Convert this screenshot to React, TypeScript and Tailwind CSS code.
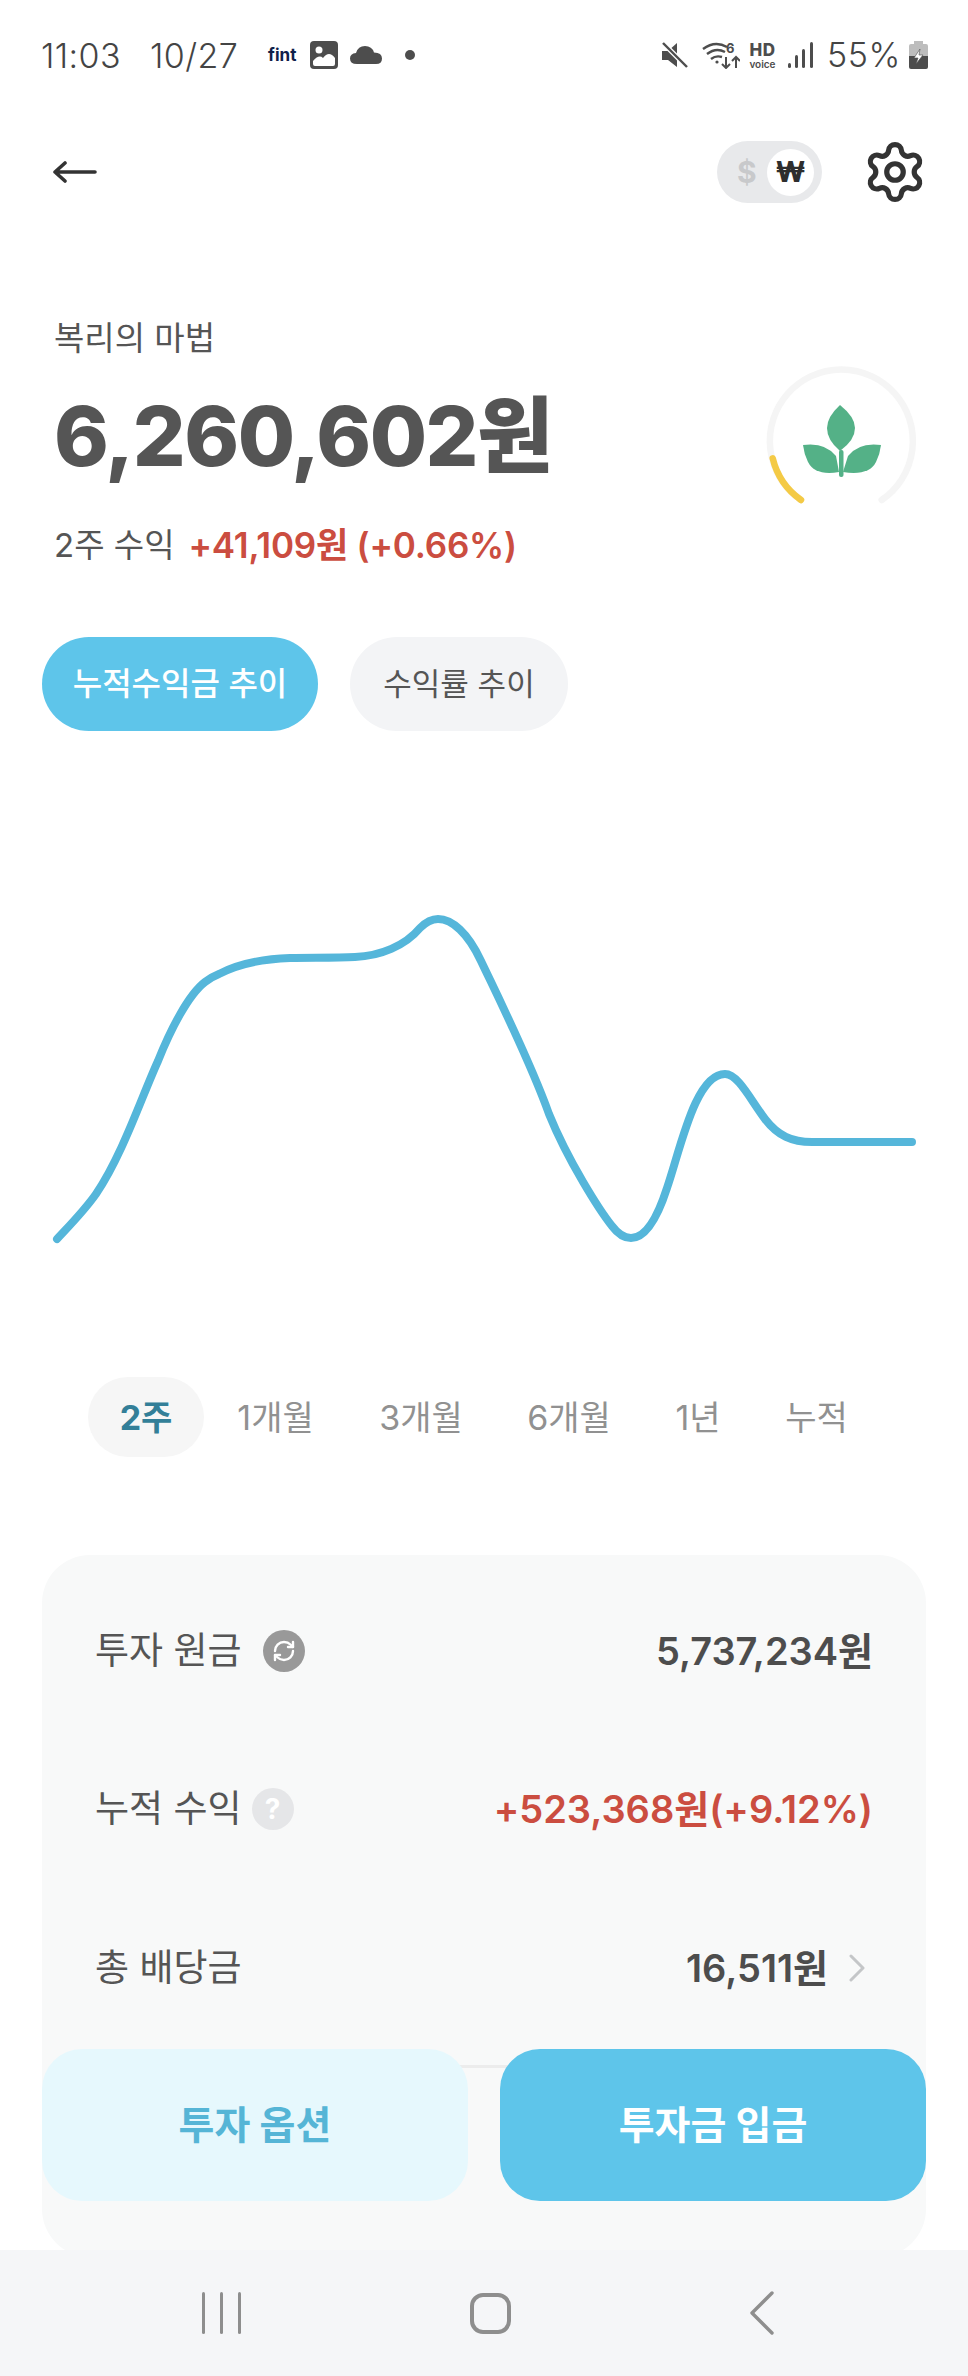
import { RefreshCw, Settings } from "lucide-react";

const chartPath =
  "M57 1238 C70 1224 84 1210 96 1193 C122 1155 142 1095 158 1060 C170 1030 188 994 205 981 C210 977 214 975 219 973 C240 962 262 958 290 957 C310 956.5 335 957 355 956 C380 955 405 945 420 927 C427 920 432 918 438 918 C452 918 468 932 481 960 C500 1000 530 1060 549 1113 C568 1160 600 1210 612 1225 C618 1233 624 1237 631 1237 C646 1237 658 1215 667 1187 C680 1150 695 1073 725 1073 C738 1073 750 1098 765 1118 C778 1135 792 1141 812 1141 L912 1141";

function StatusBar() {
  return (
    <div className="flex h-[110px] shrink-0 items-center justify-between pl-[41px] pr-[40px] text-[#444]">
      <div className="flex items-center">
        <span className="text-[34px] font-light tracking-[0.4px]">11:03</span>
        <span className="ml-[29px] text-[34px] font-light tracking-[0.4px]">10/27</span>
        <span className="ml-[30px] text-[17px] font-bold leading-none text-[#10204a]">fint</span>
        <svg className="ml-[14px]" width="28" height="28" viewBox="0 0 28 28">
          <rect width="28" height="28" rx="4" fill="#4d4d4d" />
          <circle cx="9" cy="9" r="3.5" fill="#fff" />
          <path d="M3 23 L3 20 Q9 13 13 17 Q19 9 25 17 L25 23 Q25 25 23 25 L5 25 Q3 25 3 23Z" fill="#fff" />
        </svg>
        <svg className="ml-[12px]" width="32" height="18" viewBox="0 0 32 18">
          <path d="M7 18 Q0 18 0 12.5 Q0 7.5 6 7 Q8 0 15 0 Q22 0 24 6.5 Q32 6.5 32 12.5 Q32 18 26 18Z" fill="#4d4d4d" />
        </svg>
        <div className="ml-[23px] h-[10px] w-[10px] rounded-full bg-[#4d4d4d]" />
      </div>
      <div className="flex items-center">
        <svg width="26" height="26" viewBox="0 0 26 26">
          <path d="M0 9 H6 L15 1 V25 L6 18 H0Z" fill="#4d4d4d" />
          <path d="M1 1 L25 25" stroke="#fff" strokeWidth="5" />
          <path d="M1 1 L25 25" stroke="#4d4d4d" strokeWidth="2.4" />
        </svg>
        <svg className="ml-[14px]" width="38" height="28" viewBox="0 0 38 28" fill="none" stroke="#4d4d4d">
          <path d="M1 8 Q13 -1 25 6" strokeWidth="2.4" />
          <path d="M5 13 Q14 6 23 11" strokeWidth="2.4" />
          <path d="M9 18 Q14 14 20 16" strokeWidth="2.4" />
          <circle cx="15" cy="21" r="1.6" fill="#4d4d4d" stroke="none" />
          <text x="24" y="12" fontSize="13" fontWeight="700" fill="#4d4d4d" stroke="none">6</text>
          <path d="M24 16 V27 M20 23 L24 27 L28 23" strokeWidth="2" />
          <path d="M34 27 V16 M30 20 L34 16 L38 20" strokeWidth="2" />
        </svg>
        <div className="ml-[7px] flex w-[31px] flex-col items-center text-[#4d4d4d]">
          <span className="text-[17px] font-extrabold leading-[17px] tracking-[0.5px]">HD</span>
          <span className="text-[10px] font-semibold leading-[10px]">voice</span>
        </div>
        <svg className="ml-[10px]" width="25" height="26" viewBox="0 0 25 26" fill="#4d4d4d">
          <rect x="0" y="21" width="3" height="5" rx="1.5" />
          <rect x="7" y="13" width="3" height="13" rx="1.5" />
          <rect x="14" y="7" width="3" height="19" rx="1.5" />
          <rect x="22" y="0" width="3" height="26" rx="1.5" />
        </svg>
        <span className="ml-[14px] text-[34px] font-light leading-none tracking-[0.6px]">55%</span>
        <svg className="ml-[8px]" width="19" height="28" viewBox="0 0 19 28">
          <path d="M5 0 H14 V3 H17 Q19 3 19 5 V15 H0 V5 Q0 3 2 3 H5Z" fill="#bdbdbd" />
          <path d="M0 15 H19 V26 Q19 28 17 28 H2 Q0 28 0 26Z" fill="#4d4d4d" />
          <path d="M11 8 L5 17 H9 L7 23 L14 14 H10Z" fill="#fff" stroke="#4d4d4d" strokeWidth="0.6" />
        </svg>
      </div>
    </div>
  );
}

function Header() {
  return (
    <div className="flex h-[124px] shrink-0 items-center justify-between pl-[53px] pr-[44px]">
      <svg width="44" height="22" viewBox="0 0 44 22" fill="none" stroke="#333" strokeWidth="3.6" strokeLinecap="round" strokeLinejoin="round">
        <path d="M2 11 H42 M12 2 L2 11 L12 20" />
      </svg>
      <div className="flex items-center gap-[44px]">
        <div className="flex h-[62px] w-[105px] items-center justify-between rounded-full bg-[#e8e9eb] pl-[20px] pr-[8px]">
          <span className="text-[30px] font-bold leading-none text-[#c8c9cb]">$</span>
          <div className="flex h-[47px] w-[47px] items-center justify-center rounded-full bg-white text-[28px] font-extrabold leading-none text-[#2e2e2e]">₩</div>
        </div>
        <Settings size={66} strokeWidth={1.9} color="#333" className="-mx-[4px]" />
      </div>
    </div>
  );
}

function Sprout() {
  return (
    <svg className="mt-[44px] shrink-0" width="168" height="160" viewBox="760 362 168 160" fill="none">
      <path d="M801 500 A71.5 71.5 0 1 1 881.7 500" stroke="#f5f5f5" strokeWidth="6.5" strokeLinecap="round" />
      <path d="M772.7 458.3 A71.5 71.5 0 0 0 801 500" stroke="#f4ca45" strokeWidth="6.5" strokeLinecap="round" />
      <g fill="#54b187">
        <path d="M840 405 Q855 417 855 428 Q855 440 840 451 Q827 440 827 428 Q827 417 840 405Z" />
        <path d="M803 445 Q825 442 836 456 L839 472 Q815 476 808 462 Q804 454 803 445Z" />
        <path d="M881 445 Q859 442 848 456 L843 472 Q869 476 876 462 Q880 454 881 445Z" />
        <rect x="839" y="450" width="4.5" height="27" rx="2" />
      </g>
    </svg>
  );
}

function Hero() {
  return (
    <div className="flex shrink-0 items-start justify-between pl-[54px] pr-[40px]">
      <div>
        <div className="text-[33px] leading-[40px] text-[#555]">복리의 마법</div>
        <div className="mt-[28px] whitespace-nowrap text-[83px] font-extrabold leading-[100px] tracking-[-1.5px] text-[#555]">6,260,602원</div>
        <div className="mt-[37px] flex items-center text-[33px] leading-[44px]">
          <span className="text-[#555]">2주 수익</span>
          <span className="ml-[14px] text-[35px] font-semibold tracking-[-0.2px] text-[#cb4d40]">+41,109원 (+0.66%)</span>
        </div>
      </div>
      <Sprout />
    </div>
  );
}

function Pills() {
  return (
    <div className="mt-[70px] flex shrink-0 gap-[32px] pl-[42px]">
      <div className="flex h-[94px] w-[276px] items-center justify-center rounded-full bg-[#5ec5ea] text-[32px] font-medium text-white">누적수익금 추이</div>
      <div className="flex h-[94px] w-[218px] items-center justify-center rounded-full bg-[#f3f4f6] text-[31px] text-[#555]">수익률 추이</div>
    </div>
  );
}

function Chart() {
  return (
    <svg className="mt-[70px] shrink-0" width="968" height="576" viewBox="0 800 968 576" fill="none">
      <path d={chartPath} stroke="#55b6da" strokeWidth="8" strokeLinecap="round" strokeLinejoin="round" />
    </svg>
  );
}

function Tabs() {
  const cls = "flex h-[80px] items-center justify-center whitespace-nowrap text-[34px] text-[#919191]";
  return (
    <div className="flex shrink-0 items-center pl-[88px]">
      <div className="flex h-[80px] w-[116px] items-center justify-center rounded-full bg-[#f6f6f6] text-[34px] font-bold text-[#337f98]">2주</div>
      <div className={`${cls} ml-[33px] w-[77px]`}>1개월</div>
      <div className={`${cls} ml-[66px] w-[82px]`}>3개월</div>
      <div className={`${cls} ml-[66px] w-[82px]`}>6개월</div>
      <div className={`${cls} ml-[65px] w-[46px]`}>1년</div>
      <div className={`${cls} ml-[65px] w-[61px]`}>누적</div>
    </div>
  );
}

function Card() {
  return (
    <div className="relative mx-[42px] mt-[98px] h-[702px] shrink-0 rounded-[48px] bg-[#f8f9f9] px-[53px] pt-[64px]">
      <div className="flex h-[64px] items-center justify-between">
        <div className="flex items-center text-[37px] text-[#555]">
          <span>투자 원금</span>
          <div className="ml-[21px] flex h-[42px] w-[42px] items-center justify-center rounded-full bg-[#999]">
            <RefreshCw size={24} color="#fff" strokeWidth={2.4} />
          </div>
        </div>
        <span className="text-[38px] font-semibold text-[#4d4d4d]">5,737,234원</span>
      </div>
      <div className="mt-[94px] flex h-[64px] items-center justify-between">
        <div className="flex items-center text-[37px] text-[#555]">
          <span>누적 수익</span>
          <div className="ml-[10px] flex h-[42px] w-[42px] items-center justify-center rounded-full bg-[#e5e6e8] text-[28px] font-bold leading-none text-white">?</div>
        </div>
        <span className="text-[38px] font-semibold text-[#cb4d40]">+523,368원(+9.12%)</span>
      </div>
      <div className="mt-[95px] flex h-[64px] items-center justify-between">
        <span className="text-[37px] text-[#555]">총 배당금</span>
        <div className="mr-[8px] flex items-center">
          <span className="text-[38px] font-semibold text-[#4d4d4d]">16,511원</span>
          <svg className="ml-[21px]" width="16" height="28" viewBox="0 0 16 28" fill="none" stroke="#c4c6c8" strokeWidth="3" strokeLinecap="round" strokeLinejoin="round">
            <path d="M2 2 L14 14 L2 26" />
          </svg>
        </div>
      </div>
      <div className="mt-[65px] h-[3px] bg-[#ececec]" />
      <div className="absolute left-0 right-0 top-[494px] flex justify-between">
        <div className="flex h-[152px] w-[426px] items-center justify-center rounded-[40px] bg-[#e6f8fd] text-[39px] font-bold text-[#55b5d6]">투자 옵션</div>
        <div className="flex h-[152px] w-[426px] items-center justify-center rounded-[40px] bg-[#5ec5ea] text-[39px] font-bold text-white">투자금 입금</div>
      </div>
    </div>
  );
}

function NavBar() {
  return (
    <div className="absolute inset-x-0 bottom-0 flex h-[126px] items-center bg-[#f5f6f8] pl-[202px]">
      <div className="flex h-[42px] w-[39px] justify-between">
        <div className="w-[3px] rounded-full bg-[#8e8e8e]" />
        <div className="w-[3px] rounded-full bg-[#8e8e8e]" />
        <div className="w-[3px] rounded-full bg-[#8e8e8e]" />
      </div>
      <div className="ml-[229px] h-[41px] w-[41px] rounded-[13px] border-[4px] border-[#8e8e8e]" />
      <svg className="ml-[239px]" width="24" height="44" viewBox="0 0 24 44" fill="none" stroke="#8e8e8e" strokeWidth="3.4" strokeLinecap="round" strokeLinejoin="round">
        <path d="M22 2 L2 22 L22 42" />
      </svg>
    </div>
  );
}

export default function App() {
  return (
    <div className="relative flex h-[2376px] w-[968px] flex-col overflow-hidden bg-white font-['Inter','Noto_Sans_CJK_KR',sans-serif]">
      <StatusBar />
      <Header />
      <div className="mt-[84px]">
        <Hero />
      </div>
      <Pills />
      <Chart />
      <Tabs />
      <Card />
      <NavBar />
    </div>
  );
}
